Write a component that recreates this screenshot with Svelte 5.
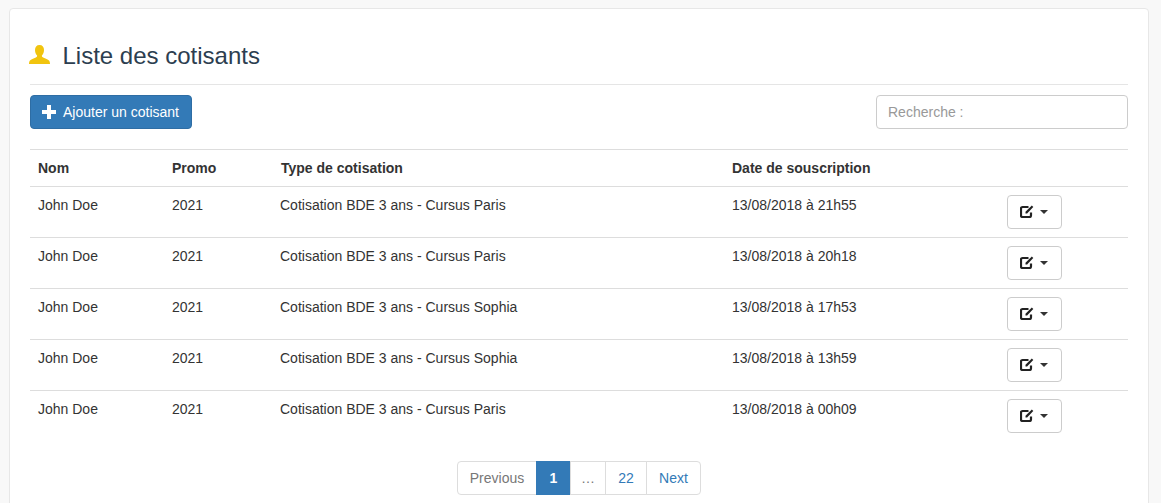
<script>
  const rows = [
    { nom: 'John Doe', promo: '2021', type: 'Cotisation BDE 3 ans - Cursus Paris', date: '13/08/2018 à 21h55' },
    { nom: 'John Doe', promo: '2021', type: 'Cotisation BDE 3 ans - Cursus Paris', date: '13/08/2018 à 20h18' },
    { nom: 'John Doe', promo: '2021', type: 'Cotisation BDE 3 ans - Cursus Sophia', date: '13/08/2018 à 17h53' },
    { nom: 'John Doe', promo: '2021', type: 'Cotisation BDE 3 ans - Cursus Sophia', date: '13/08/2018 à 13h59' },
    { nom: 'John Doe', promo: '2021', type: 'Cotisation BDE 3 ans - Cursus Paris', date: '13/08/2018 à 00h09' }
  ];
</script>

<div class="page">
  <div class="panel">
    <h1>
      <svg class="user" viewBox="0 0 21 19" width="21" height="19">
        <path d="M10.500 0c3 0 4.500 2.100 4.500 5 0 2.300-.9 4.300-2.100 5.500 0 1 .2 1.500 1.200 1.900 2.400 1 4.900 1.800 5.900 3 .6.700 1 1.900 1 3.600H0c0-1.700.4-2.900 1-3.600 1-1.200 3.500-2 5.900-3 1-.4 1.200-.9 1.200-1.900C6.900 9.300 6 7.300 6 5c0-2.900 1.500-5 4.500-5z" fill="#f1c40f" />
      </svg>
      Liste des cotisants
    </h1>

    <div class="toolbar">
      <button class="btn primary">
        <svg viewBox="0 0 14 14" width="14" height="14">
          <path d="M5 0h4v5h5v4H9v5H5V9H0V5h5z" fill="#fff" />
        </svg>
        Ajouter un cotisant
      </button>
      <input class="search" placeholder="Recherche :" />
    </div>

    <table>
      <colgroup>
        <col style="width: 134px" />
        <col style="width: 109px" />
        <col style="width: 451px" />
        <col style="width: 275px" />
        <col />
      </colgroup>
      <thead>
        <tr>
          <th>Nom</th>
          <th>Promo</th>
          <th>Type de cotisation</th>
          <th>Date de souscription</th>
          <th></th>
        </tr>
      </thead>
      <tbody>
        {#each rows as row}
          <tr>
            <td>{row.nom}</td>
            <td>{row.promo}</td>
            <td>{row.type}</td>
            <td>{row.date}</td>
            <td>
              <button class="btn action" aria-label="Actions">
                <svg viewBox="0 0 14 13" width="14" height="13">
                  <path d="M8.500 2H2.500A1.500 1.500 0 0 0 1 3.500v7A1.500 1.500 0 0 0 2.500 12h7a1.500 1.500 0 0 0 1.500-1.500V7.500" fill="none" stroke="#222" stroke-width="2.200" />
                  <path d="M5.500 8.500V6.800L11.800.5l1.500 1.500-6.200 6.500z" fill="#222" />
                </svg>
                <span class="caret"></span>
              </button>
            </td>
          </tr>
        {/each}
      </tbody>
    </table>

    <nav>
      <ul class="pagination">
        <li class="muted prev">Previous</li>
        <li class="active">1</li>
        <li class="muted dots">…</li>
        <li class="last">22</li>
        <li class="next">Next</li>
      </ul>
    </nav>
  </div>
</div>

<style>
  :global(body) {
    margin: 0;
    background: #f8f8f8;
    font-family: "Liberation Sans", Arial, sans-serif;
    font-size: 14px;
    line-height: 20px;
    color: #333;
  }
  .page {
    height: 503px;
    overflow: hidden;
    padding: 8px 12px 0 9px;
  }
  .panel {
    background: #fff;
    border: 1px solid #e7e7e7;
    border-radius: 4px;
    padding: 20px;
  }
  h1 {
    display: flex;
    align-items: center;
    gap: 12.5px;
    margin: 10px 0;
    padding-bottom: 12px;
    border-bottom: 1px solid #e5e5e5;
    font-size: 24px;
    font-weight: 400;
    line-height: 33px;
    color: #2c3e50;
  }
  .user {
    margin-left: -1px;
    margin-bottom: 3px;
  }
  .toolbar {
    display: flex;
    justify-content: space-between;
    align-items: center;
    margin-bottom: 20px;
  }
  .btn {
    font: inherit;
    border-radius: 4px;
    display: inline-flex;
    align-items: center;
    height: 34px;
    box-sizing: border-box;
  }
  .primary {
    background: #337ab7;
    border: 1px solid #2e6da4;
    color: #fff;
    width: 162px;
    padding: 0 0 0 11px;
    gap: 7px;
  }
  .search {
    width: 252px;
    height: 34px;
    box-sizing: border-box;
    border: 1px solid #ccc;
    border-radius: 4px;
    padding: 6px 11px;
    font: inherit;
    color: #555;
  }
  .search::placeholder {
    color: #999;
    opacity: 1;
  }
  table {
    width: 100%;
    border-collapse: collapse;
    table-layout: fixed;
  }
  th,
  td {
    padding: 8px;
    text-align: left;
    vertical-align: top;
    border-top: 1px solid #ddd;
  }
  th {
    font-weight: 700;
    vertical-align: bottom;
    border-bottom: 1px solid #ddd;
  }
  tbody tr:first-child td {
    border-top: none;
  }
  td:nth-child(3) {
    padding-left: 7px;
  }
  .action {
    background: #fff;
    border: 1px solid #ccc;
    padding: 0 0 2px 12px;
    gap: 6px;
    width: 55px;
  }
  .caret {
    width: 0;
    height: 0;
    margin-top: 2px;
    border-top: 4px solid #333;
    border-left: 4px solid transparent;
    border-right: 4px solid transparent;
  }
  nav {
    display: flex;
    justify-content: center;
    margin-top: 20px;
  }
  .pagination {
    display: flex;
    list-style: none;
    margin: 0;
    padding: 0;
  }
  .pagination li {
    box-sizing: border-box;
    height: 34px;
    padding: 6px 0;
    text-align: center;
    border: 1px solid #ddd;
    margin-left: -1px;
    color: #337ab7;
    background: #fff;
    width: 35px;
  }
  .pagination .prev {
    margin-left: 0;
    width: 80px;
    border-radius: 4px 0 0 4px;
  }
  .pagination .dots {
    width: 36px;
  }
  .pagination .last {
    width: 42px;
  }
  .pagination .next {
    width: 55px;
    border-radius: 0 4px 4px 0;
  }
  .pagination .muted {
    color: #777;
  }
  .pagination .active {
    background: #337ab7;
    border-color: #337ab7;
    color: #fff;
    font-weight: 700;
  }
</style>
